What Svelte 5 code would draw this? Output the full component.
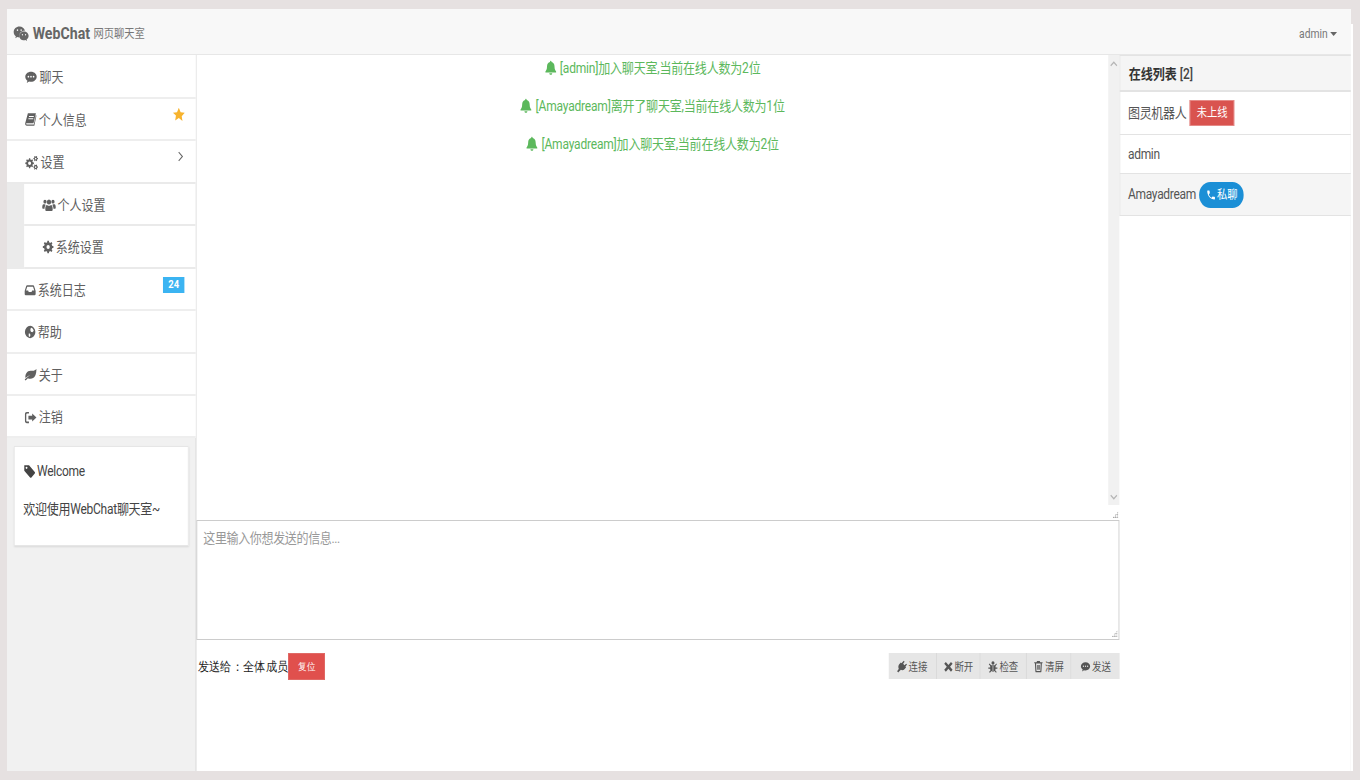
<script>
  const c = (x, y, r) => `M${x - r} ${y}a${r} ${r} 0 1 0 ${2 * r} 0a${r} ${r} 0 1 0 ${-2 * r} 0z`;
  const gear = (cx, cy, r, hole, n = 8) => {
    let d = '';
    const tooth = r * 1.32;
    for (let i = 0; i < n; i++) {
      const a = (i / n) * Math.PI * 2;
      const w = Math.PI / n / 2;
      const p = [[r, a - w * 1.25], [tooth, a - w * 0.7], [tooth, a + w * 0.7], [r, a + w * 1.25]];
      for (const [rad, t] of p) {
        d += `${d ? 'L' : 'M'}${(cx + rad * Math.cos(t)).toFixed(2)} ${(cy + rad * Math.sin(t)).toFixed(2)}`;
      }
    }
    return d + 'z' + c(cx, cy, hole);
  };
  const icons = {
    wechat: 'M9.5 3C4.8 3 1 6.1 1 10c0 2.2 1.2 4.1 3.2 5.4L3.4 18l2.9-1.5c1 .3 2 .4 3.2.5-.2-.6-.3-1.2-.3-1.9 0-3.7 3.4-6.6 7.7-6.6h.7C16.8 5.3 13.5 3 9.5 3z' + c(6.6, 7.6, 1.1) + c(12, 7.6, 1.1) + 'M23 15c0-3.1-3.1-5.6-6.8-5.6S9.4 11.900 9.400 15s3.100 5.600 6.800 5.600c.8 0 1.500-.1 2.200-.3l2.300 1.300-.6-2.100C21.800 18.400 23 16.800 23 15z' + c(13.900, 13.600, .9) + c(18.500, 13.600, .9),
    comment: 'M12 4C6.500 4 2 7.400 2 11.600c0 2.400 1.500 4.600 3.800 6L4.500 21l4.200-2.200c1 .2 2.100.4 3.300.4 5.500 0 10-3.400 10-7.600S17.500 4 12 4z' + c(7.500, 11.500, 1.400) + c(12, 11.500, 1.400) + c(16.500, 11.500, 1.400),
    book: 'M7 2h15l-4.500 16H4.800c-1 0-1.300 1-.6 1.500.3.200.7.300 1.200.300H18l4-15 1 1-4 16H5.500C3 22 1.500 20.400 2 18zM9 6.500v1.500h9v-1.500zM8 10v1.500h9V10z',
    cogs: gear(9, 13, 5.400, 2.500) + gear(19, 6.500, 2.900, 1.200, 6) + gear(19, 18.500, 2.900, 1.200, 6),
    cog: gear(12, 12, 8.200, 3.300),
    users: c(12, 7.500, 3.800) + c(5, 7, 2.800) + c(19, 7, 2.800) + 'M6.500 21c-.8-.7-1-1.500-1-2.800 0-3.700 1-6.200 3.200-6.200.9.800 2 1.300 3.300 1.300s2.400-.5 3.300-1.300c2.200 0 3.200 2.500 3.200 6.200 0 1.300-.3 2.100-1 2.800zM4.500 11c.6.500 1.300.8 2 .8-1.500 1.500-2.200 3.300-2.300 5.700H1.500C.5 17.500 0 17 0 16c0-2.500.7-5 2.500-5zM19.500 11c-.6.500-1.300.8-2 .8 1.500 1.500 2.200 3.300 2.300 5.700h2.700c1 0 1.500-.5 1.500-1.500 0-2.500-.7-5-2.500-5z',
    inbox: 'M6 4h12c1 0 1.600.5 2 1.400l3 8.100V19c0 1-.8 1.800-1.800 1.800H2.800C1.800 20.800 1 20 1 19v-5.500l3-8.100C4.400 4.500 5 4 6 4zM6.200 6.500L3.800 13H8l1.200 2.600h5.600L16 13h4.200l-2.400-6.500z',
    globe: c(12, 12, 10.500) + 'M14 4.500c2.500.5 4.500 2.500 5.200 5-.5 1.500-1.500 2.500-3 3-1.800-.3-3.500-1.500-3.700-3.500-.2-2 .3-3.500 1.500-4.500zM9.500 14c1.700.3 3 1.500 3 3 0 1.500-.7 2.800-2 3.500-1-1-1.500-2-1.500-3.500z',
    leaf: 'M23 3c-.3 5-.6 11-5.500 14.200-3.500 2.300-8 2-10.500.8C5.500 19.300 4 20.500 2.300 21.500L1 20c1.500-1.500 5-4.500 10-7-3.500 1-6.500 2.500-8.500 4.500C1.500 11.500 5.500 6 12 6c4 0 8 0 11-3z',
    signout: 'M9 3v2.500H5.500C4.700 5.500 4 6.200 4 7v10c0 .8.7 1.500 1.500 1.500H9V21H5c-2.200 0-3.500-1.300-3.500-3.500v-11C1.500 4.300 2.800 3 5 3zM15 5.500L23 12l-8 6.500V15H8V9h7z',
    tag: 'M2 2h9.500L23 13.500c.8.800.8 2 0 2.800L16.300 23c-.8.800-2 .8-2.800 0L2 11.500z' + c(6.500, 6.500, 1.900),
    bell: 'M12 1c.8 0 1.300.5 1.300 1.300v.8c3.500.6 5.700 3.300 5.700 7.400 0 5 1.800 6.500 3 8v1.500H2v-1.500c1.200-1.500 3-3 3-8 0-4.100 2.200-6.800 5.700-7.400v-.8C10.700 1.500 11.200 1 12 1zM9.300 21h5.400c0 1.500-1.200 2.500-2.700 2.500S9.300 22.500 9.300 21z',
    phone: 'M6.600 10.800c1.400 2.800 3.800 5.100 6.600 6.600l2.200-2.200c.3-.3.7-.4 1-.2 1.100.4 2.300.6 3.600.6.600 0 1 .4 1 1V20c0 .6-.4 1-1 1C10.600 21 3 13.400 3 4c0-.6.4-1 1-1h3.500c.6 0 1 .4 1 1 0 1.300.2 2.500.6 3.600.1.300 0 .7-.2 1z',
    plug: 'M15.500 1.500l1.800 1.800-3.200 3.700 2.900 2.900 3.700-3.200 1.800 1.800-3.400 3.500 1.400 1.400-3 3c-2.500 2.500-5.800 3-8.200 1.500L5 21.800l-1.500 1.200-2.500-2.500L3.200 19l1.500-3.200C3.200 13.400 3.700 10 6.200 7.600l3-3L10.600 6z',
    times: 'M6.500 3.500L12 9l5.500-5.500L21 7l-5.500 5.500L21 18l-3.500 3.500L12 16l-5.500 5.500L3 18l5.500-5.500L3 7z',
    bug: c(12, 5.500, 3.300) + 'M8 9.500h8l3-3 1.500 1.500-3 3v3h4v2h-4c0 1-.2 2-.7 2.800l3.200 3.200-1.500 1.500-3-3c-.8.800-1.700 1.300-2.800 1.500V10.500h-1.400V22c-1.100-.2-2-.7-2.800-1.500l-3 3L3.500 22l3.200-3.200C6.200 18 6 17 6 16H2v-2h4v-3L3 8l1.500-1.500z',
    trash: 'M9 2h6l1 2h5v2h-1.500l-1 15c-.1 1-.8 1.800-2 1.800H7.500c-1.200 0-1.900-.8-2-1.800l-1-15H3V4h5zM7 6.500l.8 13.500c0 .4.200.5.500.5h7.400c.3 0 .5-.1.500-.5L17 6.500zM9 9h1.500v9H9zM11.300 9h1.400v9h-1.400zM13.500 9H15v9h-1.500z',
    star: 'M12 1l3.400 7.300 7.600 1-5.600 5.400 1.400 7.800L12 17.700l-6.800 3.800 1.400-7.800L1 9.300l7.600-1z'
  };
  const menu = [
    { icon: 'comment', size: 16, label: '聊天' },
    { icon: 'book', size: 15, label: '个人信息', star: true },
    { icon: 'cogs', size: 17, label: '设置', arrow: true },
    { icon: 'users', size: 16, label: '个人设置', sub: true },
    { icon: 'cog', size: 14, label: '系统设置', sub: true },
    { icon: 'inbox', size: 14, label: '系统日志', badge: '24' },
    { icon: 'globe', size: 14, label: '帮助' },
    { icon: 'leaf', size: 15, label: '关于' },
    { icon: 'signout', size: 15, label: '注销' }
  ];
  const messages = ['[admin]加入聊天室,当前在线人数为2位', '[Amayadream]离开了聊天室,当前在线人数为1位', '[Amayadream]加入聊天室,当前在线人数为2位'];
  const tools = [
    { icon: 'plug', label: '连接', width: 56 },
    { icon: 'times', label: '断开', width: 51 },
    { icon: 'bug', label: '检查', width: 54 },
    { icon: 'trash', label: '清屏', width: 52.5 },
    { icon: 'comment', label: '发送', width: 56 }
  ];
</script>

{#snippet icon(name, size = 14)}
  <svg class="ic" viewBox="0 0 24 24" width={size} height={size} aria-hidden="true"><path fill="currentColor" fill-rule="evenodd" d={icons[name]} /></svg>
{/snippet}

<div class="frame">
  <div class="stage">
    <header class="navbar">
      <div class="brand">
        {@render icon('wechat', 19)}
        <strong>WebChat</strong>
        <small>网页聊天室</small>
      </div>
      <div class="user">admin <span class="caret"></span></div>
    </header>
    <div class="body">
      <aside class="side">
        <nav>
          {#each menu as m}
            <div class="row" class:sub={m.sub}>
              <div class="row-in">
                {@render icon(m.icon, m.size)}
                <span>{m.label}</span>
                {#if m.star}
                  <svg class="star" viewBox="0 0 24 24" width="15" height="15" aria-hidden="true"><path fill="currentColor" d={icons.star} /></svg>
                {/if}
                {#if m.arrow}
                  <svg class="arrow" viewBox="0 0 8 12" width="7" height="11" aria-hidden="true"><path d="M1.500 1L6.500 6 1.500 11" fill="none" stroke="currentColor" stroke-width="1.300" /></svg>
                {/if}
                {#if m.badge}<b class="badge">{m.badge}</b>{/if}
              </div>
            </div>
          {/each}
        </nav>
        <div class="card">
          <p class="card-title">{@render icon('tag')}<span>Welcome</span></p>
          <p class="card-text">欢迎使用WebChat聊天室~</p>
        </div>
      </aside>
      <main class="main">
        <div class="chat">
          <div class="log">
            {#each messages as msg}
              <p class="msg">{@render icon('bell', 15)} {msg}</p>
            {/each}
          </div>
          <div class="scroll">
            <svg viewBox="0 0 10 6" width="9" height="6" aria-hidden="true"><path d="M1 5L5 1l4 4" fill="none" stroke="#b5b5b5" stroke-width="1.500" /></svg>
            <svg viewBox="0 0 10 6" width="9" height="6" aria-hidden="true"><path d="M1 1l4 4 4-4" fill="none" stroke="#b5b5b5" stroke-width="1.500" /></svg>
          </div>
          <i class="grip g1"></i>
        </div>
        <div class="input">
          <span>这里输入你想发送的信息...</span>
          <i class="grip g2"></i>
        </div>
        <div class="bar">
          <div class="to">
            <span class="to-text">发送给：全体成员</span>
            <button class="reset">复位</button>
          </div>
          <div class="tools">
            {#each tools as t}
              <button class="tool" style="width:{t.width}px">{@render icon(t.icon, 13)}{t.label}</button>
            {/each}
          </div>
        </div>
      </main>
      <aside class="online">
        <h3>在线列表 <span>[2]</span></h3>
        <div class="person p1">图灵机器人 <b class="off">未上线</b></div>
        <div class="person p2">admin</div>
        <div class="person p3">Amayadream <b class="pm">{@render icon('phone', 12)}私聊</b></div>
      </aside>
    </div>
  </div>
</div>

<style>
  :global(body) {
    margin: 0;
    background: #e6e1e1;
    overflow: hidden;
  }
  .frame {
    margin: 9px 0 0 7px;
    width: 1344px;
    height: 762px;
    overflow: visible;
    position: relative;
  }
  .frame::after {
    content: "";
    position: absolute;
    left: 1344px;
    top: 15px;
    bottom: 0;
    width: 1.5px;
    background: #fff;
  }
  .stage {
    width: 1568px;
    height: 762px;
    transform: scaleX(0.857);
    transform-origin: 0 0;
    background: #fff;
    display: flex;
    flex-direction: column;
    font: 14px/20px Roboto, "Noto Sans CJK SC", sans-serif;
    color: #555;
  }
  .ic {
    vertical-align: -2px;
    flex: none;
  }
  .navbar {
    height: 46px;
    flex: none;
    box-sizing: border-box;
    background: #f8f8f8;
    border-bottom: 1px solid #e7e7e7;
    display: flex;
    align-items: center;
    justify-content: space-between;
    padding: 4px 16px 0 7px;
  }
  .brand {
    color: #666;
    display: flex;
    align-items: center;
    gap: 4px;
  }
  .brand strong {
    font-size: 16.500px;
    color: #666;
  }
  .brand small {
    font-size: 12px;
    color: #777;
  }
  .user {
    font-size: 12px;
    color: #777;
  }
  .caret {
    display: inline-block;
    border: 4px solid transparent;
    border-top-color: #666;
    border-bottom: 0;
    vertical-align: 2px;
  }
  .body {
    flex: 1;
    display: flex;
    min-height: 0;
  }
  .side {
    width: 221px;
    flex: none;
    box-sizing: border-box;
    background: #f1f1f1;
    border-right: 1px solid #d9d9d9;
  }
  .row {
    height: 42.5px;
    box-sizing: border-box;
    border-bottom: 2px solid #eee;
    background: #fff;
  }
  .row:first-child { height: 43.5px; }
  .row:last-child { height: 41.5px; }
  .row.sub {
    background: #ebebeb;
    padding-left: 20px;
    border-bottom: 0;
  }
  .row-in {
    height: 100%;
    position: relative;
    display: flex;
    align-items: center;
    gap: 2px;
    padding: 1.500px 0 0 20px;
    box-sizing: border-box;
    background: #fff;
    color: #606060;
  }
  .row:first-child .row-in,
  .row:last-child .row-in {
    padding-top: 3px;
  }
  .row.sub .row-in {
    padding-left: 21px;
    border-bottom: 2px solid #eaeaea;
  }
  .row:nth-child(3) { border-bottom-color: #eaeaea; }
  .star {
    position: absolute;
    right: 12px;
    top: 8px;
    color: #f7b32e;
  }
  .arrow {
    position: absolute;
    right: 14px;
    top: 10px;
    color: #666;
  }
  .badge {
    position: absolute;
    right: 13px;
    top: 8px;
    width: 25px;
    height: 16px;
    background: #3bb4f2;
    color: #fff;
    font-size: 11px;
    line-height: 16px;
    text-align: center;
  }
  .card {
    margin: 8px 8px 0 8px;
    height: 100px;
    box-sizing: border-box;
    background: #fff;
    border: 1px solid #e6e6e6;
    box-shadow: 0 1px 2px rgba(0, 0, 0, 0.1);
    padding: 14px 10px;
    letter-spacing: -0.300px;
  }
  .card p {
    margin: 0;
    color: #444;
  }
  .card-title span {
    margin-left: 2px;
  }
  .card-text {
    margin-top: 18px !important;
  }
  .main {
    flex: 1;
    min-width: 0;
    display: flex;
    flex-direction: column;
  }
  .chat {
    height: 465px;
    flex: none;
    display: flex;
    position: relative;
  }
  .log {
    flex: 1;
    padding-top: 3px;
  }
  .msg {
    margin: 0 0 18px;
    text-align: center;
    color: #5cb85c;
    letter-spacing: -0.220px;
  }
  .scroll {
    width: 13px;
    height: 450px;
    background: #f1f1f1;
    display: flex;
    flex-direction: column;
    justify-content: space-between;
    align-items: center;
    padding: 6px 0 5px;
    box-sizing: border-box;
  }
  .grip {
    position: absolute;
    right: 1px;
    bottom: 2px;
    width: 7px;
    height: 7px;
    background: radial-gradient(circle, #888 45%, transparent 50%) 0 0 / 2.500px 2.500px;
    clip-path: polygon(100% 0, 100% 100%, 0 100%);
  }
  .input {
    height: 120px;
    flex: none;
    box-sizing: border-box;
    border: 1px solid #ccc;
    position: relative;
    color: #999;
    padding: 7px 7px;
    letter-spacing: -0.400px;
  }
  .bar {
    display: flex;
    justify-content: space-between;
    align-items: flex-start;
    margin-top: 13px;
  }
  .to {
    display: flex;
    align-items: center;
    font-family: "Liberation Serif", serif;
    color: #222;
    padding-left: 1.500px;
  }
  .to-text {
    font-size: 12.500px;
    letter-spacing: 0.200px;
  }
  .reset {
    width: 43px;
    height: 27px;
    border: 1px solid #e06a66;
    background: #e0504d;
    color: #fff;
    font: 10px "Liberation Serif", serif;
    padding: 0;
  }
  .tools {
    display: flex;
    background: #e6e6e6;
  }
  .tool {
    height: 26px;
    padding: 0;
    border: 0;
    border-right: 1px solid #d6d6d6;
    background: #e6e6e6;
    color: #555;
    font: 11px Roboto, "Noto Sans CJK SC", sans-serif;
    display: flex;
    align-items: center;
    justify-content: center;
    gap: 1px;
  }
  .tool:last-child { border-right: 0; }
  .online {
    width: 270px;
    flex: none;
    box-sizing: border-box;
    color: #555;
  }
  h3 {
    margin: 0;
    height: 37px;
    box-sizing: border-box;
    background: #f5f5f5;
    border: 1px solid #e3e3e3;
    border-bottom-width: 2px;
    border-right: 0;
    padding: 0 0 0 10px;
    font-size: 14px;
    line-height: 37px;
    font-weight: 700;
    color: #333;
  }
  h3 span {
    font-size: 14px;
    font-weight: 500;
    color: #444;
  }
  .person {
    box-sizing: border-box;
    border-bottom: 1px solid #e3e3e3;
    border-left: 1px solid #e3e3e3;
    padding-left: 9px;
    display: flex;
    align-items: center;
    gap: 4px;
    letter-spacing: -0.350px;
  }
  .p1 { height: 43px; }
  .p2 { height: 39px; }
  .p3 { height: 42px; background: #f5f5f5; padding-bottom: 2px; }
  .p3 b { margin-top: 2px; }
  .person b {
    height: 26px;
    width: 52px;
    color: #fff;
    font-size: 12px;
    font-weight: 400;
    line-height: 26px;
    text-align: center;
    display: flex;
    align-items: center;
    justify-content: center;
    gap: 1px;
    letter-spacing: 0;
  }
  .off { background: #d9534f; border: 1px solid #e58a87; box-sizing: border-box; line-height: 24px !important; }
  .pm { background: #1b8fd6; border-radius: 13px; }
</style>
